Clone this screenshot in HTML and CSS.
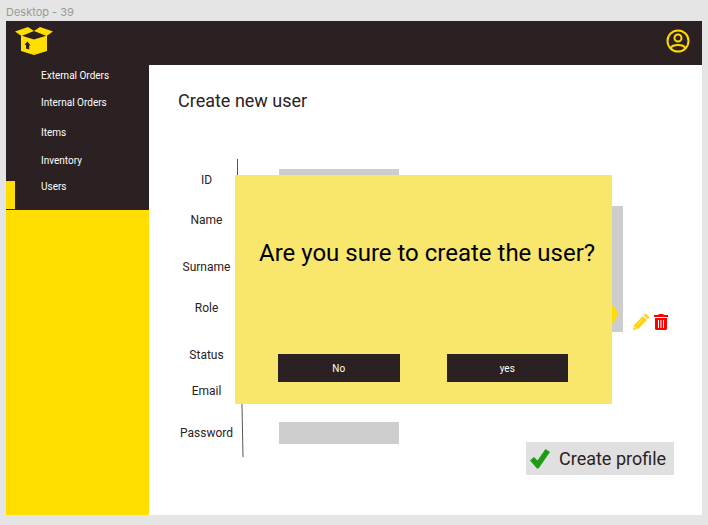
FILE: index.html
```html
<!DOCTYPE html>
<html lang="en">
<head>
<meta charset="utf-8">
<title>Create new user</title>
<link rel="stylesheet" href="styles.css">
</head>
<body>
<p class="frame-name">Desktop - 39</p>
<div class="app">
  <header class="topbar">
    <a href="#" class="logo" aria-label="Home">
      <svg width="38" height="28" viewBox="0 0 38 28">
        <path fill="#ffde00" d="M6 8.500 19 12.500 32 8.500V24L19 28 6 24Z"/>
        <path fill="#2b2122" d="M8 8 19 4 30 8 19 11.500Z"/>
        <path fill="#ffde00" d="M0 4.500 13 0 19 4 6.500 9ZM19 4 25 0 38 4.500 31.500 9Z"/>
        <path fill="#2b2122" d="M12.500 14.500 15.500 18.500H14.200V22.500L11 21.500V18L9.500 17.500Z"/>
      </svg>
    </a>
    <a href="#" class="account" aria-label="Account">
      <svg width="24" height="24" viewBox="0 0 24 24" fill="none" stroke="#ffd800" stroke-width="2">
        <circle cx="12" cy="12" r="10.500"/>
        <circle cx="12" cy="9" r="3.500"/>
        <path d="M4.500 19C6 16.500 8 16 12 16S18 16.500 19.500 19"/>
      </svg>
    </a>
  </header>
  <div class="body">
    <aside class="sidebar">
      <nav class="nav">
        <a href="#">External Orders</a>
        <a href="#">Internal Orders</a>
        <a href="#">Items</a>
        <a href="#">Inventory</a>
        <a href="#" class="active">Users</a>
      </nav>
    </aside>
    <main class="main">
      <h1>Create new user</h1>
      <div class="content">
        <svg class="divider" width="8" height="298" viewBox="0 0 8 298"><path d="M1.500 0V16L7 298" fill="none" stroke="#555"/></svg>
        <form class="fields" id="user-form">
          <label for="id">ID</label><input id="id">
          <label for="name">Name</label><input id="name">
          <label for="surname">Surname</label><input id="surname">
          <label for="role">Role</label><input id="role">
          <label for="status">Status</label><input id="status">
          <label for="email">Email</label><input id="email">
          <label for="password">Password</label><input id="password" type="password">
        </form>
        <div class="photo"><span class="photo-badge"></span></div>
        <div class="actions">
          <button type="button" aria-label="Edit">
            <svg width="16" height="16" viewBox="0 0 16 16">
              <path fill="#ffd21a" d="M0 16 1 11 10 2 14 6 5 15ZM10.800 1.200 12 0H13.500L16 2.500V4L14.800 5.200Z"/>
              <path d="M4 11 9.500 5.500" stroke="#fff" stroke-width=".5" fill="none"/>
              <path d="M1.500 13 3 14.500" stroke="#fff" fill="none"/>
            </svg>
          </button>
          <button type="button" aria-label="Delete">
            <svg width="14" height="16" viewBox="0 0 14 16">
              <path fill="#f00" d="M0 1H4L5 0H9L10 1H14V3H0ZM1 4H13V15L12 16H2L1 15Z"/>
              <path d="M4.500 6V14M7 6V14M9.500 6V14" stroke="#fff"/>
            </svg>
          </button>
        </div>
      </div>
      <button class="create" type="submit" form="user-form">
        <svg width="20" height="20" viewBox="0 0 20 20"><path fill="#1e9c14" d="M0 11.500 4 8 7.500 11.500 15.500 0 20 3 8.500 19.500H7Z"/></svg>
        Create profile
      </button>
      <section class="dialog" role="dialog" aria-labelledby="question">
        <h2 id="question">Are you sure to create the user?</h2>
        <div class="choices">
          <button type="button">No</button>
          <button type="button">yes</button>
        </div>
      </section>
    </main>
  </div>
</div>
</body>
</html>
```
FILE: styles.css
```css
* { box-sizing: border-box; }

body {
  margin: 0;
  min-height: 100vh;
  display: flex;
  flex-direction: column;
  padding: 0 6px 10px;
  background: #e5e5e5;
  color: #2b2122;
  font-family: Roboto, sans-serif;
}

button, input { font: inherit; color: inherit; border: 0; padding: 0; }
button { background: none; cursor: pointer; }
svg { display: block; }

.frame-name {
  margin: 0;
  padding-top: 4px;
  height: 21px;
  color: #999;
  font: 11px/16px Inter, sans-serif;
}

.app {
  flex: 1;
  display: flex;
  flex-direction: column;
  background: #fff;
}

.topbar {
  display: flex;
  justify-content: space-between;
  align-items: flex-start;
  height: 44px;
  padding: 6px 12px 0 9px;
  background: #2b2122;
}

.account { padding-top: 2px; }

.body { flex: 1; display: flex; }

.sidebar {
  flex: none;
  width: 143px;
  background: #ffde00;
}

.nav {
  display: grid;
  grid-template-rows: 27px 30px 28px 26px 28px;
  padding: 4px 0 2px;
  background: #2b2122;
}

.nav a {
  padding-left: 35px;
  color: #fff;
  font-size: 10px;
  line-height: 14px;
  text-decoration: none;
}

.nav .active { position: relative; }
.nav .active::before {
  content: "";
  position: absolute;
  left: 0;
  top: 1px;
  width: 9px;
  height: 28px;
  background: #ffde00;
}

.main {
  position: relative;
  flex: 1;
  display: flex;
  flex-direction: column;
  padding: 24px 28px 40px 29px;
}

h1 {
  margin: 0;
  font-size: 18px;
  line-height: 24px;
  font-weight: 400;
}

.content {
  position: relative;
  display: flex;
  padding-top: 56px;
}

.divider { position: absolute; left: 58px; top: 46px; }

.fields {
  display: grid;
  grid-template-columns: 57px 120px;
  grid-template-rows: 40px 47px 41px 47px 36px 42px 20px;
  column-gap: 44px;
  align-items: start;
}

.fields label {
  font-size: 12px;
  line-height: 22px;
  text-align: center;
}

.fields input { width: 100%; height: 22px; background: #cdcdcd; }

.photo {
  position: relative;
  flex: 1;
  height: 126px;
  margin: 37px 0 0 100px;
  background: #cdcdcd;
}

.photo-badge {
  position: absolute;
  right: 6px;
  bottom: 7px;
  width: 22px;
  height: 22px;
  border-radius: 50%;
  background: #ffde00;
}

.actions {
  display: flex;
  align-items: flex-start;
  gap: 5px;
  padding: 145px 6px 0 10px;
}

.create {
  display: flex;
  align-items: center;
  align-self: flex-end;
  gap: 9px;
  width: 148px;
  height: 33px;
  padding-left: 4px;
  background: #e0e0e0;
  font-size: 18px;
  white-space: nowrap;
}

.dialog {
  position: absolute;
  top: 110px;
  left: 86px;
  right: 90px;
  height: 229px;
  display: flex;
  flex-direction: column;
  justify-content: space-between;
  padding: 60px 14px 22px 24px;
  background: #f9e66c;
}

h2 {
  margin: 0;
  color: #000;
  font-size: 24px;
  line-height: 36px;
  font-weight: 400;
  white-space: nowrap;
}

.choices {
  display: flex;
  gap: 47px;
  padding: 0 30px 0 19px;
}

.choices button {
  flex: 1;
  height: 28px;
  background: #2b2122;
  color: #fff;
  font-size: 10px;
}
```
